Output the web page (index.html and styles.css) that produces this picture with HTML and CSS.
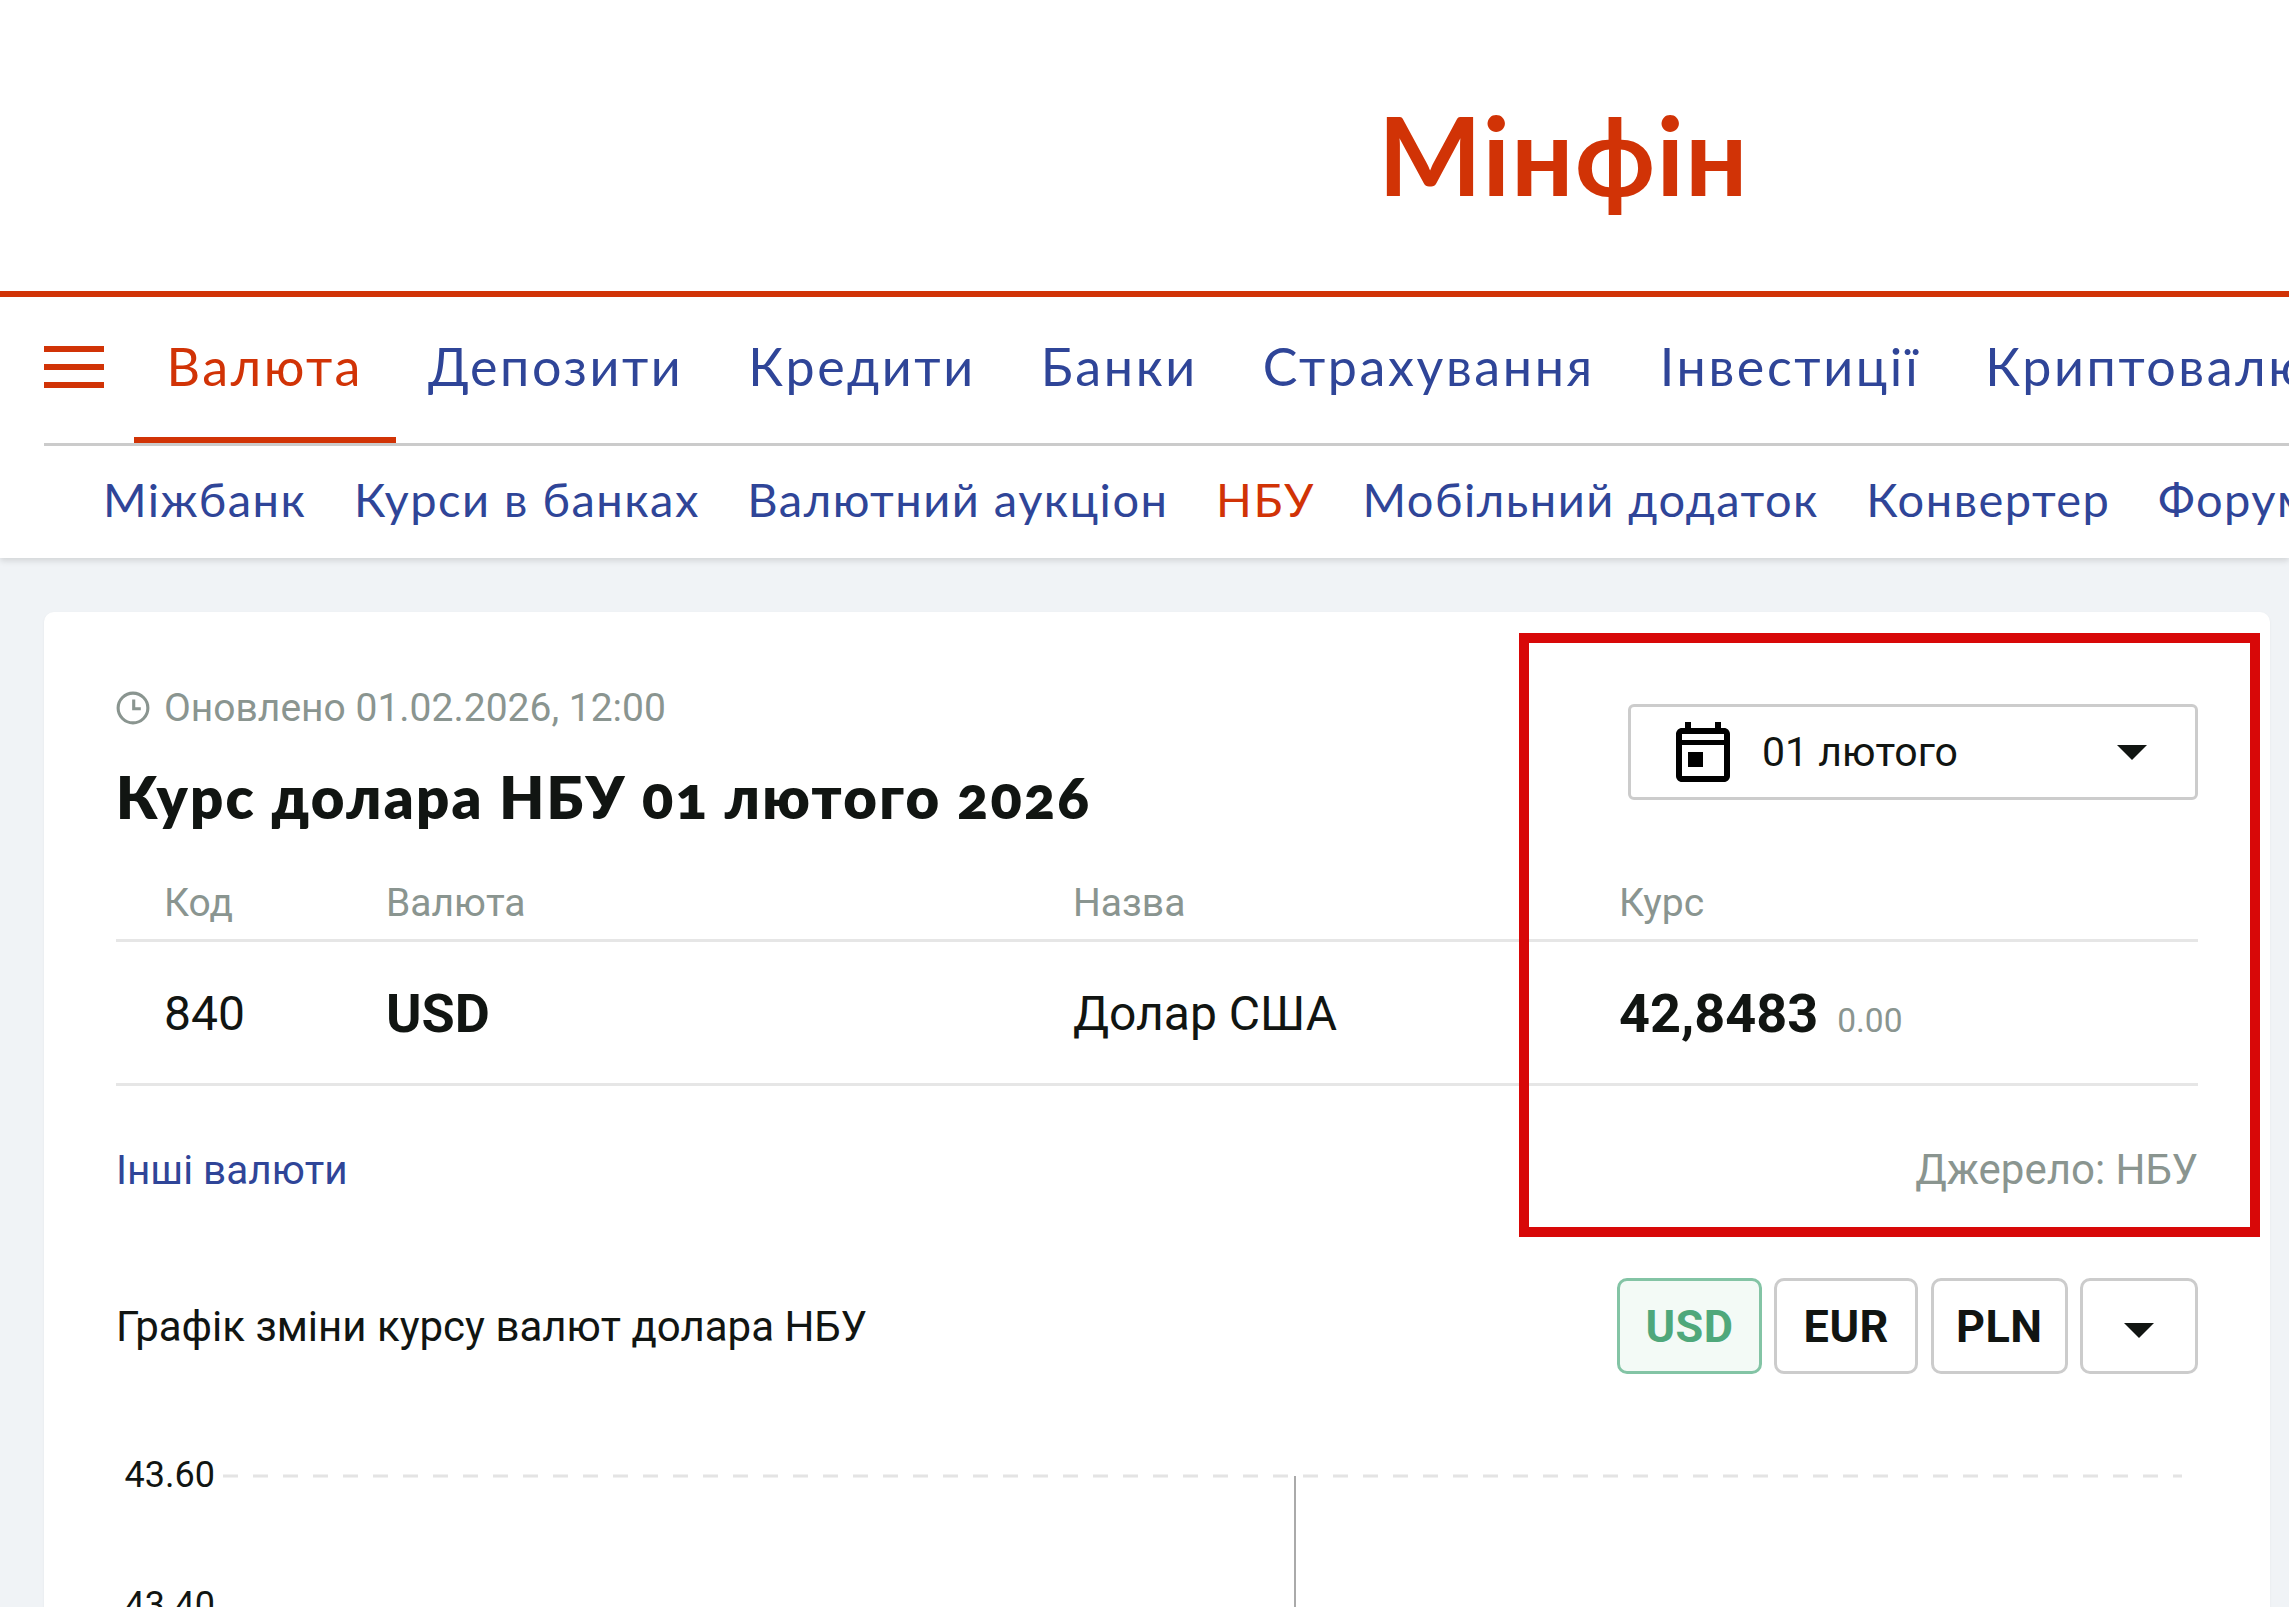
FILE: index.html
```html
<!DOCTYPE html>
<html lang="uk">
<head>
  <meta charset="UTF-8" />
  <title>Курс долара НБУ</title>
  <link rel="stylesheet" href="styles.css">
</head>
<body>
  <header class="site-header">
    <div class="logo-bar">
      <a class="logo">Мінфін</a>
    </div>
    <div class="nav-wrap">
      <nav class="main-nav">
        <button class="burger"><span></span><span></span><span></span></button>
        <a class="nav-link active">Валюта</a>
        <a class="nav-link">Депозити</a>
        <a class="nav-link">Кредити</a>
        <a class="nav-link">Банки</a>
        <a class="nav-link">Страхування</a>
        <a class="nav-link">Інвестиції</a>
        <a class="nav-link">Криптовалюти</a>
      </nav>
      <nav class="sub-nav">
        <a>Міжбанк</a>
        <a>Курси в банках</a>
        <a>Валютний аукціон</a>
        <a class="active">НБУ</a>
        <a>Мобільний додаток</a>
        <a>Конвертер</a>
        <a>Форум</a>
      </nav>
    </div>
  </header>

  <main class="card">
    <div class="top-row">
      <div>
        <div class="updated">
          <svg class="clock" viewBox="0 0 24 24"><circle cx="12" cy="12" r="10.5"/><path d="M12.5 6v6.5h5"/></svg>
          Оновлено 01.02.2026, 12:00
        </div>
        <h1>Курс долара НБУ 01 лютого 2026</h1>
      </div>
      <div class="date-select">
        <svg class="cal" viewBox="0 0 24 24"><path fill-rule="evenodd" d="M19 3h-1V1h-2v2H8V1H6v2H5c-1.1 0-2 .9-2 2v14c0 1.1.9 2 2 2h14c1.1 0 2-.9 2-2V5c0-1.1-.9-2-2-2zM5 5h14v2H5zM5 8.7h14V19H5zM7 11h5v5H7z"/></svg>
        <span class="date-text">01 лютого</span>
        <i class="caret"></i>
      </div>
    </div>

    <div class="rate-table">
      <div class="rate-row head">
        <div>Код</div>
        <div>Валюта</div>
        <div>Назва</div>
        <div>Курс</div>
      </div>
      <div class="rate-row">
        <div>840</div>
        <div class="strong">USD</div>
        <div>Долар США</div>
        <div><span class="strong">42,8483</span><span class="diff">0.00</span></div>
      </div>
    </div>

    <div class="table-foot">
      <a class="more">Інші валюти</a>
      <span class="source">Джерело: НБУ</span>
    </div>

    <div class="chart-head">
      <div class="chart-title">Графік зміни курсу валют долара НБУ</div>
      <div class="tabs">
        <button class="tab active">USD</button>
        <button class="tab tab-eur">EUR</button>
        <button class="tab tab-pln">PLN</button>
        <button class="tab more-tab"><i class="caret"></i></button>
      </div>
    </div>

    <svg class="chart" viewBox="0 0 2226 233">
      <line class="grid" x1="179" y1="102" x2="2138" y2="102"/>
      <line class="marker" x1="1251" y1="102" x2="1251" y2="233"/>
      <text x="171" y="113">43.60</text>
      <text x="171" y="243">43.40</text>
    </svg>

    <div class="highlight"></div>
  </main>
</body>
</html>
```

FILE: styles.css
```css
html, body {
  margin: 0;
  padding: 0;
  height: 1607px;
  overflow: hidden;
}

body {
  font-family: Roboto, sans-serif;
  background-color: #f0f3f6;
  color: #111512;
}

a {
  cursor: pointer;
}

.site-header {
  background: white;
  box-shadow: 0 3px 6px rgba(0,0,0,0.12);
}

.logo-bar {
  box-sizing: border-box;
  height: 297px;
  padding: 14px 0 0 1378px;
  display: flex;
  align-items: center;
  border-bottom: 6px solid #d13306;
}

.logo {
  font-family: Lato, sans-serif;
  font-size: 110px;
  font-weight: 700;
  letter-spacing: 1px;
  line-height: 1;
  color: #d13306;
}

.nav-wrap {
  padding-left: 44px;
  height: 261px;
  overflow: hidden;
}

.main-nav {
  display: flex;
  align-items: stretch;
  height: 146px;
  border-bottom: 3px solid #cbcbcb;
  white-space: nowrap;
  font-family: Lato, sans-serif;
}

.burger {
  width: 60px;
  margin-right: 30px;
  padding: 0 0 6px;
  border: none;
  background: none;
  display: flex;
  flex-direction: column;
  justify-content: center;
  gap: 12px;
  flex-shrink: 0;
}

.burger span {
  display: block;
  height: 6px;
  background: #d13306;
}

.nav-link {
  padding: 0 32.5px;
  line-height: 138px;
  font-size: 52px;
  letter-spacing: 2.6px;
  color: #2f4598;
  height: 140px;
  flex-shrink: 0;
}

.nav-link.active {
  color: #d13306;
  border-bottom: 6px solid #d13306;
}

.sub-nav {
  display: flex;
  gap: 47.5px;
  padding-left: 59px;
  white-space: nowrap;
  font-family: Lato, sans-serif;
  font-size: 47px;
  letter-spacing: 1.5px;
  line-height: 106px;
  color: #2f4598;
}

.sub-nav .active {
  color: #d13306;
}

.card {
  position: relative;
  box-sizing: border-box;
  height: 995px;
  margin: 54px 19px 0 44px;
  padding: 68px 72px 0;
  overflow: hidden;
  background: white;
  border-radius: 10px 10px 0 0;
  box-shadow: 0 1px 3px rgba(0,0,0,0.05);
}

.top-row {
  display: flex;
  justify-content: space-between;
  height: 184px;
}

.updated {
  display: flex;
  align-items: center;
  gap: 14px;
  font-size: 39px;
  line-height: 56px;
  color: #8a9590;
}

.clock {
  width: 34px;
  height: 34px;
  fill: none;
  stroke: #8a9590;
  stroke-width: 2.2;
}

h1 {
  margin: 26px 0 0;
  font-family: Lato, sans-serif;
  font-size: 58px;
  font-weight: 800;
  letter-spacing: 2.2px;
  line-height: 70px;
  font-variant-numeric: oldstyle-nums;
}

.date-select {
  box-sizing: border-box;
  width: 570px;
  height: 96px;
  margin-top: 24px;
  padding: 0 48px 0 36px;
  display: flex;
  align-items: center;
  border: 3px solid #cccccc;
  border-radius: 6px;
}

.cal {
  width: 72px;
  height: 72px;
  margin: 6px 23px 0 0;
}

.date-text {
  flex: 1;
  font-size: 41px;
}

.caret {
  display: block;
  width: 0;
  height: 0;
  border-left: 15px solid transparent;
  border-right: 15px solid transparent;
  border-top: 15px solid #111512;
}

.rate-row {
  box-sizing: border-box;
  display: grid;
  grid-template-columns: 270px 687px 546px 1fr;
  align-items: center;
  height: 144px;
  padding-top: 2px;
  font-size: 48px;
  border-bottom: 3px solid #e6e6e6;
}

.rate-row > div:first-child {
  padding-left: 48px;
}

.rate-row.head {
  height: 78px;
  font-size: 39px;
  color: #8a9590;
}

.strong {
  font-size: 54px;
  font-weight: 700;
}

.diff {
  margin-left: 19px;
  font-size: 33.5px;
  color: #8a9590;
}

.table-foot {
  display: flex;
  justify-content: space-between;
  margin-top: 54px;
  font-size: 42px;
  line-height: 60px;
}

.more {
  color: #2f4598;
  font-size: 40.5px;
}

.source {
  color: #8a9590;
}

.chart-head {
  display: flex;
  justify-content: space-between;
  align-items: center;
  margin-top: 78px;
}

.chart-title {
  font-size: 42px;
}

.tabs {
  display: flex;
  gap: 12.5px;
}

.tab {
  height: 96px;
  padding: 0 25px;
  border: 3px solid #cccccc;
  border-radius: 10px;
  background: white;
  color: #111512;
  font-family: Roboto, sans-serif;
  font-size: 45px;
  font-weight: 700;
  letter-spacing: 0.5px;
}

.tab-eur {
  padding: 0 26.5px;
}

.tab-pln {
  padding: 0 22px;
}

.tab.active {
  border-color: #83c4a5;
  background: #f3faf6;
  color: #4fa87b;
}

.more-tab {
  width: 118px;
  padding-top: 8px;
  display: flex;
  align-items: center;
  justify-content: center;
}

.chart {
  display: block;
  width: 2226px;
  height: 233px;
  margin-left: -72px;
  overflow: visible;
}

.chart text {
  font-family: Roboto, sans-serif;
  font-size: 36px;
  fill: #111512;
  text-anchor: end;
}

.chart .grid {
  stroke: #e4e4e4;
  stroke-width: 3;
  stroke-dasharray: 15 15;
}

.chart .marker {
  stroke: #aaaaaa;
  stroke-width: 2;
}

.highlight {
  position: absolute;
  top: 21px;
  left: 1475px;
  box-sizing: border-box;
  width: 741px;
  height: 604px;
  border: 10px solid #d80808;
}
```
